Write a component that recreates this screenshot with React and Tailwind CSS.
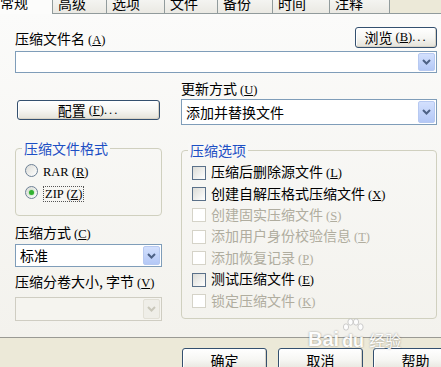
import React from "react";

const tabs = [
  { label: "高级", w: 54 },
  { label: "选项", w: 58 },
  { label: "文件", w: 53 },
  { label: "备份", w: 55 },
  { label: "时间", w: 57 },
  { label: "注释", w: 60 },
];

const options = [
  { label: "压缩后删除源文件", k: "L" },
  { label: "创建自解压格式压缩文件", k: "X" },
  { label: "创建固实压缩文件", k: "S", disabled: true },
  { label: "添加用户身份校验信息", k: "T", disabled: true },
  { label: "添加恢复记录", k: "P", disabled: true },
  { label: "测试压缩文件", k: "E" },
  { label: "锁定压缩文件", k: "K", disabled: true },
];

function Acc({ k, dots }) {
  return (
    <span className="ml-[3px] font-['Liberation_Serif',serif] text-[12.5px]">
      (<span className="underline underline-offset-1">{k}</span>)
      {dots && <span className="tracking-[2px]">...</span>}
    </span>
  );
}

function Btn({ children, className = "" }) {
  return (
    <div
      className={`flex items-center justify-center rounded-[3px] border border-[#34506f] bg-gradient-to-b from-white via-[#f6f6f3] to-[#e4e2d9] shadow-[inset_-1px_-1px_0_#d8d3c6,inset_1px_1px_0_#fff] ${className}`}
    >
      {children}
    </div>
  );
}

function Arrow({ disabled }) {
  return (
    <div
      className={`flex w-[17px] items-center justify-center rounded-[2px] border ${
        disabled
          ? "border-[#e2e0d6] bg-[#efeee8]"
          : "border-[#b7c9f1] bg-gradient-to-b from-[#d3e0fd] to-[#b4c8f6]"
      }`}
    >
      <svg width="9" height="6" viewBox="0 0 9 6">
        <path
          d="M1 1 L4.5 4.5 L8 1"
          fill="none"
          stroke={disabled ? "#c9c7ba" : "#4d6185"}
          strokeWidth="2"
        />
      </svg>
    </div>
  );
}

function Combo({ text, disabled, className = "" }) {
  return (
    <div
      className={`flex items-stretch border p-px ${
        disabled ? "border-[#cfcdc2] bg-[#f5f4ef]" : "border-[#7f9db9] bg-white"
      } ${className}`}
    >
      <div className="flex flex-1 items-center pl-[3px] leading-[15px]">{text}</div>
      <Arrow disabled={disabled} />
    </div>
  );
}

function Group({ title, className = "", pad = "", children }) {
  return (
    <div className={`rounded-[4px] border border-[#d0d0bf] ${className}`}>
      <div className="-mt-[8px] ml-[6px] w-fit bg-[#f8f8f6] px-[2px] leading-[15px] text-[#1d4fc4]">
        {title}
      </div>
      <div className={`mt-[4px] ${pad}`}>{children}</div>
    </div>
  );
}

function Radio({ checked, children }) {
  return (
    <div className="flex h-[21.4px] items-center">
      <span className="flex h-[13px] w-[13px] items-center justify-center rounded-full border border-[#6d8196] bg-gradient-to-br from-[#dcdcd7] to-white">
        {checked && (
          <span className="h-[5px] w-[5px] rounded-full bg-[#31b131] shadow-[0_0_2px_#7ed07e]" />
        )}
      </span>
      <span className="ml-[5px]">{children}</span>
    </div>
  );
}

function Check({ label, k, disabled }) {
  return (
    <div className="flex h-[21.4px] items-center">
      <span
        className={`h-[14px] w-[14px] border ${
          disabled
            ? "border-[#d5d3c8] bg-white"
            : "border-[#5a7089] bg-gradient-to-br from-[#dcdcd7] to-white"
        }`}
      />
      <span className={`ml-[5px] leading-[15px] ${disabled ? "text-[#b0ad9f]" : "text-black"}`}>
        {label}
        <Acc k={k} />
      </span>
    </div>
  );
}

export default function App() {
  return (
    <div className="relative h-[367px] w-[441px] overflow-hidden bg-[#ece9d8] font-['Noto_Sans_CJK_SC',sans-serif] text-[14px] text-black">
      {/* Tabs */}
      <div className="flex h-[14px]">
        <div className="w-[53px] overflow-hidden border-r border-[#919b9c] bg-[#fcfcfb]">
          <div className="-mt-[5px] leading-[15px]">常规</div>
        </div>
        {tabs.map((t) => (
          <div
            key={t.label}
            style={{ width: t.w }}
            className="overflow-hidden border-r border-b border-[#919b9c] bg-gradient-to-b from-[#f4f4f1] to-[#eae9e3] pl-[5px]"
          >
            <div className="-mt-[4px] leading-[15px]">{t.label}</div>
          </div>
        ))}
        <div className="flex-1 border-b border-[#919b9c]" />
      </div>

      {/* Panel */}
      <div className="h-[324px] border-b border-[#9a9a94] bg-gradient-to-b from-[#fbfbfa] to-[#f3f2ed] pt-[13px] pr-[4px] pl-[15px]">
        <div className="flex h-[21px] items-end justify-between">
          <div className="leading-[15px]">
            压缩文件名
            <Acc k="A" />
          </div>
          <Btn className="h-[21px] w-[82px]">
            浏览
            <Acc k="B" dots />
          </Btn>
        </div>
        <Combo className="mt-[3px] h-[22px]" text="" />

        <div className="mt-[8px] flex gap-[19px]">
          {/* Left column */}
          <div className="w-[147px]">
            <Btn className="mt-[19px] ml-[2px] h-[20px] w-[143px]">
              配置
              <Acc k="F" dots />
            </Btn>
            <Group title="压缩文件格式" className="mt-[28px] h-[68px]" pad="pl-[9px]">
              <Radio>
                <span className="font-['Liberation_Serif',serif] text-[12.5px]">
                  RAR (<span className="underline underline-offset-1">R</span>)
                </span>
              </Radio>
              <Radio checked>
                <span className="border border-dotted border-[#555] px-px font-['Liberation_Serif',serif] text-[12.5px] leading-[12px]">
                  ZIP (<span className="underline underline-offset-1">Z</span>)
                </span>
              </Radio>
            </Group>
            <div className="mt-[9px] leading-[15px]">
              压缩方式
              <Acc k="C" />
            </div>
            <Combo className="mt-[2px] h-[23px]" text="标准" />
            <div className="mt-[7px] leading-[15px]">
              压缩分卷大小, 字节
              <Acc k="V" />
            </div>
            <Combo className="mt-[6px] h-[24px]" text="" disabled />
          </div>

          {/* Right column */}
          <div className="flex-1">
            <div className="leading-[15px]">
              更新方式
              <Acc k="U" />
            </div>
            <Combo className="mt-[1px] h-[26px]" text="添加并替换文件" />
            <Group title="压缩选项" className="mt-[25px] h-[169px]" pad="pl-[10px]">
              {options.map((o) => (
                <Check key={o.k} {...o} />
              ))}
            </Group>
          </div>
        </div>
      </div>

      {/* Dialog buttons */}
      <div className="flex pt-[10px] pl-[182px]">
        <Btn className="h-[24px] w-[85px] shrink-0">确定</Btn>
        <Btn className="ml-[11px] h-[24px] w-[85px] shrink-0">取消</Btn>
        <Btn className="ml-[10px] h-[24px] w-[85px] shrink-0">帮助</Btn>
      </div>

      {/* Baidu watermark */}
      <div className="pointer-events-none absolute top-[318px] left-[308px] flex items-end text-white opacity-90 [text-shadow:0_0_2px_rgba(0,0,0,0.45)]">
        <span className="font-['Liberation_Sans',sans-serif] text-[20px] font-bold leading-[22px]">Bai</span>
        <span className="relative mx-[2px] flex flex-col items-center">
          <svg width="24" height="16" viewBox="0 0 24 16" className="mb-[-2px]">
            <g fill="#fff" stroke="#bbb" strokeWidth="0.8">
              <ellipse cx="5" cy="9" rx="2.6" ry="3.2" />
              <ellipse cx="9.5" cy="4" rx="2.6" ry="3.2" />
              <ellipse cx="15" cy="4" rx="2.6" ry="3.2" />
              <ellipse cx="19.5" cy="9" rx="2.6" ry="3.2" />
            </g>
          </svg>
          <span className="font-['Liberation_Sans',sans-serif] text-[18px] font-bold leading-[18px]">du</span>
        </span>
        <span className="ml-[2px] text-[16px] leading-[20px]">经验</span>
      </div>
    </div>
  );
}
